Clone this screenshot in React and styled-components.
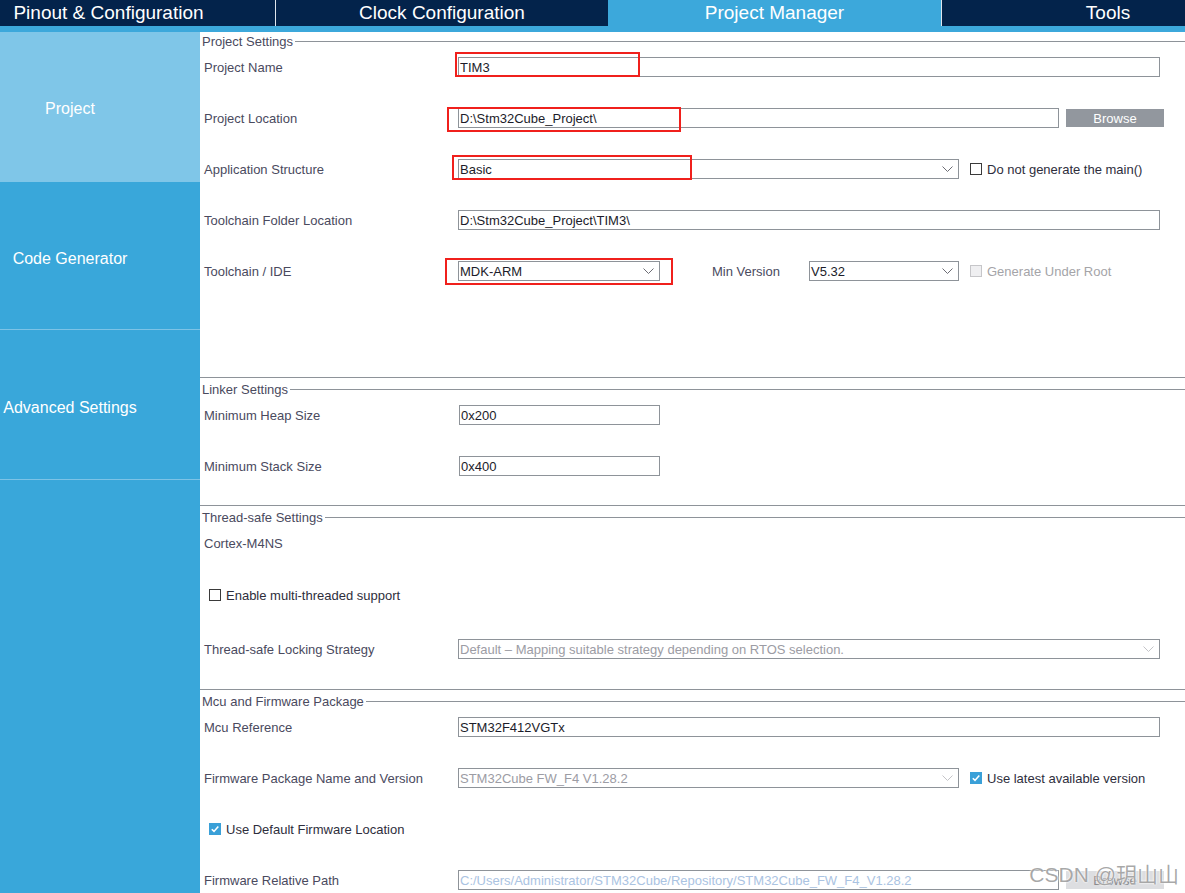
import React from 'react';
import styled, { createGlobalStyle } from 'styled-components';

const GlobalStyle = createGlobalStyle`
  html, body {
    margin: 0;
    padding: 0;
    background: #fff;
  }
  body {
    font-family: "Liberation Sans", Arial, sans-serif;
  }
`;

const Screen = styled.div`
  position: relative;
  width: 1185px;
  height: 893px;
  overflow: hidden;
  display: flex;
  flex-direction: column;
`;

const TabBar = styled.div`
  height: 26px;
  flex-shrink: 0;
  background: #03234b;
  overflow: hidden;
`;

const TabStrip = styled.div`
  display: flex;
  height: 100%;
  margin-left: -58px;
`;

const Tab = styled.div`
  width: 333px;
  flex-shrink: 0;
  box-sizing: border-box;
  display: flex;
  align-items: center;
  justify-content: center;
  color: #fff;
  font-size: 19px;
  padding-bottom: 1px;
  background: ${p => (p.$active ? '#3ca8db' : '#03234b')};
  border-left: ${p => (p.$plain ? 'none' : '1px solid #dfe5ec')};
`;

const Strip = styled.div`
  height: 6px;
  flex-shrink: 0;
  background: #3ca8db;
`;

const Body = styled.div`
  flex: 1;
  display: flex;
  min-height: 0;
`;

const Sidebar = styled.div`
  width: 200px;
  flex-shrink: 0;
  background: #39a7da;
  display: flex;
  flex-direction: column;
`;

const NavItem = styled.div`
  height: ${p => p.$h}px;
  box-sizing: border-box;
  display: flex;
  align-items: center;
  justify-content: center;
  padding-right: 60px;
  padding-top: ${p => (p.$active ? 4 : 6)}px;
  color: #fff;
  font-size: 16px;
  white-space: nowrap;
  background: ${p => (p.$active ? '#7fc6e8' : 'transparent')};
  border-bottom: ${p => (p.$line ? '1px solid #7dc3e6' : 'none')};
`;

const Main = styled.div`
  flex: 1;
  display: flex;
  flex-direction: column;
  background: #fff;
  color: #4a4a5e;
  font-size: 13px;
`;

const Section = styled.div`
  box-sizing: border-box;
  flex-shrink: 0;
  height: ${p => (p.$h ? `${p.$h}px` : 'auto')};
  flex-grow: ${p => (p.$h ? 0 : 1)};
  padding-top: ${p => p.$top}px;
  border-bottom: ${p => (p.$h ? '1px solid #8e9399' : 'none')};
`;

const SectionTitle = styled.div`
  display: flex;
  align-items: center;
  height: 14px;
  padding-left: 2px;
  white-space: nowrap;

  &::after {
    content: '';
    flex: 1;
    height: 1px;
    margin-left: 2px;
    background: #8e9399;
  }
`;

const Row = styled.div`
  display: flex;
  align-items: center;
  height: 20px;
  margin-top: ${p => (p.$gap ?? 31)}px;
  padding-left: ${p => (p.$indent ?? 4)}px;
  white-space: nowrap;
`;

const Label = styled.div`
  width: ${p => p.$w ?? 254}px;
  flex-shrink: 0;
  margin-left: ${p => p.$ml ?? 0}px;
`;

const Field = styled.div`
  position: relative;
  box-sizing: border-box;
  width: ${p => p.$w}px;
  height: 20px;
  flex-shrink: 0;
  border: 1px solid #8e9399;
  background: #fff;
  padding: 1px 18px 0 1px;
  line-height: 18px;
  overflow: hidden;
  color: ${p => (p.$tone === 'muted' ? '#9c9ca4' : p.$tone === 'faint' ? '#aac3e2' : '#1c1c2a')};
`;

const Chevron = styled.svg`
  position: absolute;
  right: 5px;
  top: 6px;
  width: 11px;
  height: 6px;
`;

const Annotated = styled.div`
  position: relative;
  flex-shrink: 0;
`;

const RedBox = styled.div`
  position: absolute;
  box-sizing: border-box;
  border: 2px solid #f0201c;
  pointer-events: none;
`;

const BrowseButton = styled.div`
  width: 98px;
  height: 18px;
  margin-left: 7px;
  flex-shrink: 0;
  display: flex;
  align-items: center;
  justify-content: center;
  background: ${p => (p.$disabled ? '#dddee1' : '#92979e')};
  color: ${p => (p.$disabled ? '#8a8a8e' : '#fff')};
  font-size: 13px;
`;

const Check = styled.div`
  display: flex;
  align-items: center;
  gap: 5px;
  margin-left: ${p => p.$ml ?? 0}px;
  color: ${p => (p.$disabled ? '#a4a4a8' : '#2e2e3c')};
`;

const Box = styled.span`
  box-sizing: border-box;
  width: 12px;
  height: 12px;
  display: inline-flex;
  align-items: center;
  justify-content: center;
  border: 1px solid ${p => (p.$checked ? '#3aa0d8' : p.$disabled ? '#c6c6c9' : '#3a3a3a')};
  background: ${p => (p.$checked ? '#3aa0d8' : p.$disabled ? '#efeff1' : '#fff')};
`;

const Watermark = styled.div`
  position: absolute;
  right: 6px;
  bottom: 5px;
  font-family: "Liberation Sans", "Noto Sans CJK SC", sans-serif;
  font-size: 21px;
  color: rgba(140, 140, 140, 0.75);
  text-shadow: 0 0 2px #fff, 0 0 2px #fff;
  pointer-events: none;
`;

const Select = ({ w, tone, children }) => (
  <Field $w={w} $tone={tone}>
    {children}
    <Chevron viewBox="0 0 11 6">
      <polyline points="0.5,0.5 5.5,5.5 10.5,0.5" fill="none" stroke={tone ? '#c4c4c8' : '#6c6c74'} strokeWidth="1" />
    </Chevron>
  </Field>
);

const Checkbox = ({ checked, disabled, ml, children }) => (
  <Check $ml={ml} $disabled={disabled}>
    <Box $checked={checked} $disabled={disabled}>
      {checked && (
        <svg width="10" height="10" viewBox="0 0 10 10">
          <polyline points="1.8,5.2 4,7.4 8.3,2.4" fill="none" stroke="#fff" strokeWidth="1.6" />
        </svg>
      )}
    </Box>
    {children}
  </Check>
);

const Marked = ({ box, children }) => (
  <Annotated>
    {children}
    <RedBox style={{ left: box[0], top: box[1], width: box[2], height: box[3] }} />
  </Annotated>
);

const tabs = ['Pinout & Configuration', 'Clock Configuration', 'Project Manager', 'Tools'];

export default function App() {
  return (
    <Screen>
      <GlobalStyle />
      <TabBar>
        <TabStrip>
          {tabs.map((t, i) => (
            <Tab key={t} $active={t === 'Project Manager'} $plain={i === 0 || t === 'Project Manager'}>
              {t}
            </Tab>
          ))}
        </TabStrip>
      </TabBar>
      <Strip />
      <Body>
        <Sidebar>
          <NavItem $h={150} $active>Project</NavItem>
          <NavItem $h={148} $line>Code Generator</NavItem>
          <NavItem $h={150} $line>Advanced Settings</NavItem>
        </Sidebar>
        <Main>
          <Section $h={346} $top={2}>
            <SectionTitle>Project Settings</SectionTitle>
            <Row $gap={9}>
              <Label>Project Name</Label>
              <Marked box={[-3, -5, 185, 25]}>
                <Field $w={702}>TIM3</Field>
              </Marked>
            </Row>
            <Row>
              <Label>Project Location</Label>
              <Marked box={[-11, -1, 234, 25]}>
                <Field $w={601}>D:\Stm32Cube_Project\</Field>
              </Marked>
              <BrowseButton>Browse</BrowseButton>
            </Row>
            <Row>
              <Label>Application Structure</Label>
              <Marked box={[-6, -4, 240, 25]}>
                <Select w={501}>Basic</Select>
              </Marked>
              <Checkbox ml={11}>Do not generate the main()</Checkbox>
            </Row>
            <Row>
              <Label>Toolchain Folder Location</Label>
              <Field $w={702}>D:\Stm32Cube_Project\TIM3\</Field>
            </Row>
            <Row>
              <Label>Toolchain / IDE</Label>
              <Marked box={[-13, -3, 228, 27]}>
                <Select w={202}>MDK-ARM</Select>
              </Marked>
              <Label $w={97} $ml={52}>Min Version</Label>
              <Select w={150}>V5.32</Select>
              <Checkbox ml={11} disabled>Generate Under Root</Checkbox>
            </Row>
          </Section>

          <Section $h={128} $top={4}>
            <SectionTitle>Linker Settings</SectionTitle>
            <Row $gap={9}>
              <Label $w={255}>Minimum Heap Size</Label>
              <Field $w={201}>0x200</Field>
            </Row>
            <Row>
              <Label $w={255}>Minimum Stack Size</Label>
              <Field $w={201}>0x400</Field>
            </Row>
          </Section>

          <Section $h={184} $top={4}>
            <SectionTitle>Thread-safe Settings</SectionTitle>
            <Row $gap={9}>
              <Label>Cortex-M4NS</Label>
            </Row>
            <Row $gap={32} $indent={9}>
              <Checkbox>Enable multi-threaded support</Checkbox>
            </Row>
            <Row $gap={34}>
              <Label>Thread-safe Locking Strategy</Label>
              <Select w={702} tone="muted">Default – Mapping suitable strategy depending on RTOS selection.</Select>
            </Row>
          </Section>

          <Section $top={4}>
            <SectionTitle>Mcu and Firmware Package</SectionTitle>
            <Row $gap={9}>
              <Label>Mcu Reference</Label>
              <Field $w={702}>STM32F412VGTx</Field>
            </Row>
            <Row>
              <Label>Firmware Package Name and Version</Label>
              <Select w={501} tone="muted">STM32Cube FW_F4 V1.28.2</Select>
              <Checkbox ml={11} checked>Use latest available version</Checkbox>
            </Row>
            <Row $indent={9}>
              <Checkbox checked>Use Default Firmware Location</Checkbox>
            </Row>
            <Row>
              <Label>Firmware Relative Path</Label>
              <Field $w={601} $tone="faint">C:/Users/Administrator/STM32Cube/Repository/STM32Cube_FW_F4_V1.28.2</Field>
              <BrowseButton $disabled>Browse</BrowseButton>
            </Row>
          </Section>
        </Main>
      </Body>
      <Watermark>CSDN @玥山山</Watermark>
    </Screen>
  );
}
